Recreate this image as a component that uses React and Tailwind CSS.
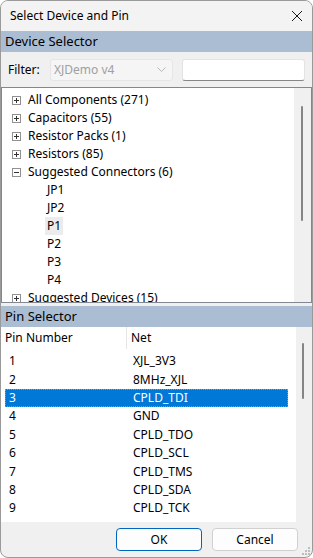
import React from "react";

const font = { fontFamily: '"Noto Sans", "Open Sans", sans-serif' };

const treeItems = [
  { label: "All Components (271)", expander: "+" },
  { label: "Capacitors (55)", expander: "+" },
  { label: "Resistor Packs (1)", expander: "+" },
  { label: "Resistors (85)", expander: "+" },
  { label: "Suggested Connectors (6)", expander: "-" },
  { label: "JP1", child: true },
  { label: "JP2", child: true },
  { label: "P1", child: true, current: true },
  { label: "P2", child: true },
  { label: "P3", child: true },
  { label: "P4", child: true },
  { label: "Suggested Devices (15)", expander: "+" },
];

const pins = [
  ["1", "XJL_3V3"],
  ["2", "8MHz_XJL"],
  ["3", "CPLD_TDI"],
  ["4", "GND"],
  ["5", "CPLD_TDO"],
  ["6", "CPLD_SCL"],
  ["7", "CPLD_TMS"],
  ["8", "CPLD_SDA"],
  ["9", "CPLD_TCK"],
];

const Expander = ({ open }) => (
  <svg width="9" height="9" viewBox="0 0 9 9" className="shrink-0">
    <rect x="0.5" y="0.5" width="8" height="8" fill="white" stroke="#919191" />
    <line x1="2" y1="4.5" x2="7" y2="4.5" stroke="#333" />
    {!open && <line x1="4.5" y1="2" x2="4.5" y2="7" stroke="#333" />}
  </svg>
);

const SectionHeader = ({ children }) => (
  <div className="h-[21px] bg-[#abbdd2] flex items-center pl-1 text-[13px] text-black shrink-0">
    {children}
  </div>
);

const App = () => {
  return (
    <div
      className="w-[313px] h-[558px] bg-[#f0f0f0] border border-[#9a9a9a] rounded-lg overflow-hidden flex flex-col text-[12px] text-black"
      style={font}
    >
      {/* title bar */}
      <div className="h-[30px] flex items-center justify-between pl-[9px] pr-[9px] bg-[#f3f3f3] shrink-0">
        <span className="text-[12px]">Select Device and Pin</span>
        <svg width="12" height="12" viewBox="0 0 12 12">
          <path d="M1 1 L11 11 M11 1 L1 11" stroke="#1a1a1a" strokeWidth="1" />
        </svg>
      </div>

      <SectionHeader>Device Selector</SectionHeader>

      {/* filter row */}
      <div className="h-[35px] flex items-center shrink-0 pl-[7px] pr-[7px]">
        <span className="w-[42px]">Filter:</span>
        <div className="w-[123px] h-[22px] bg-[#f5f5f5] border border-[#e6e6e6] rounded-[3px] flex items-center justify-between pl-[3px] pr-[6px] text-[#a0a0a0] text-[12px]">
          <span>XJDemo v4</span>
          <svg width="9" height="6" viewBox="0 0 9 6">
            <path d="M0.5 0.5 L4.5 4.5 L8.5 0.5" fill="none" stroke="#b8b8b8" />
          </svg>
        </div>
        <div className="ml-[9px] w-[123px] h-[22px] bg-white border border-[#e3e3e3] border-b-[#868686] rounded-[3px]" />
      </div>

      {/* tree */}
      <div className="h-[216px] border border-[#828790] bg-white flex shrink-0 overflow-hidden">
        <div className="flex-1 pt-[3px] overflow-hidden">
          {treeItems.map((item) => (
            <div key={item.label} className="h-[18px] flex items-center whitespace-nowrap">
              {item.child ? (
                <span
                  className={`ml-[43px] px-[2px] leading-[18px] ${item.current ? "bg-[#ececec]" : ""}`}
                >
                  {item.label}
                </span>
              ) : (
                <>
                  <span className="ml-[10px] flex">
                    <Expander open={item.expander === "-"} />
                  </span>
                  <span className="ml-[7px]">{item.label}</span>
                </>
              )}
            </div>
          ))}
        </div>
        <div className="w-[17px] bg-[#f0f0f0] shrink-0 relative">
          <div className="absolute left-[7px] top-[18px] w-[2px] h-[115px] bg-[#858585] rounded-full" />
        </div>
      </div>

      <div className="h-[3px] shrink-0" />

      <SectionHeader>Pin Selector</SectionHeader>

      {/* pin list */}
      <div className="h-[195px] flex shrink-0 overflow-hidden">
        <div className="flex-1 bg-white overflow-hidden">
          <div className="h-[22px] flex items-center">
            <div className="w-[126px] pl-[4px] border-r border-[#e5e5e5] h-full flex items-center">
              Pin Number
            </div>
            <div className="pl-[4px]">Net</div>
          </div>
          <div className="pt-[3px]">
            {pins.map(([n, net]) => {
              const selected = n === "3";
              return (
                <div
                  key={n}
                  className={`h-[18.4px] flex items-center mr-[8px] ml-[4px] ${
                    selected ? "bg-[#0078d7] text-white border border-dotted border-[#d08a3a]" : "border border-transparent"
                  }`}
                >
                  <span className="w-[127px] pl-[3px]">{n}</span>
                  <span>{net}</span>
                </div>
              );
            })}
          </div>
        </div>
        <div className="w-[16px] bg-[#f0f0f0] shrink-0 relative">
          <div className="absolute left-[6px] top-[16px] w-[2px] h-[56px] bg-[#858585] rounded-full" />
        </div>
      </div>

      {/* buttons */}
      <div className="flex-1 flex items-center justify-end pr-[14px] gap-[10px] relative">
        <button className="w-[86px] h-[23px] bg-[#fdfdfd] border border-[#0067c0] rounded-[4px] text-[12px]">
          OK
        </button>
        <button className="w-[86px] h-[23px] bg-[#fdfdfd] border border-[#d0d0d0] rounded-[4px] text-[12px]">
          Cancel
        </button>
        <svg width="8" height="8" viewBox="0 0 8 8" className="absolute right-[2px] bottom-[2px]">
          <rect x="6" y="0" width="2" height="2" fill="#bdbdbd" />
          <rect x="3" y="3" width="2" height="2" fill="#bdbdbd" />
          <rect x="6" y="3" width="2" height="2" fill="#bdbdbd" />
          <rect x="0" y="6" width="2" height="2" fill="#bdbdbd" />
          <rect x="3" y="6" width="2" height="2" fill="#bdbdbd" />
          <rect x="6" y="6" width="2" height="2" fill="#bdbdbd" />
        </svg>
      </div>
    </div>
  );
};

export default App;
